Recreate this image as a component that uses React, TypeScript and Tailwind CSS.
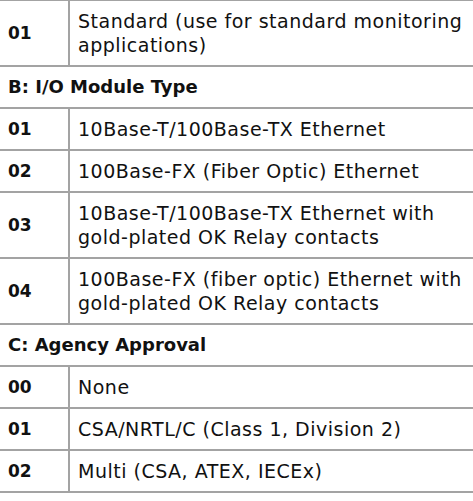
const rows: (
  | { kind: "head"; label: string }
  | { kind: "row"; code: string; text: string }
)[] = [
  { kind: "row", code: "01", text: "Standard (use for standard monitoring applications)" },
  { kind: "head", label: "B: I/O Module Type" },
  { kind: "row", code: "01", text: "10Base-T/100Base-TX Ethernet" },
  { kind: "row", code: "02", text: "100Base-FX (Fiber Optic) Ethernet" },
  { kind: "row", code: "03", text: "10Base-T/100Base-TX Ethernet with gold\u2011plated OK Relay contacts" },
  { kind: "row", code: "04", text: "100Base-FX (fiber optic) Ethernet with gold\u2011plated OK Relay contacts" },
  { kind: "head", label: "C: Agency Approval" },
  { kind: "row", code: "00", text: "None" },
  { kind: "row", code: "01", text: "CSA/NRTL/C (Class 1, Division 2)" },
  { kind: "row", code: "02", text: "Multi (CSA, ATEX, IECEx)" },
];

export default function App() {
  return (
    <div className="w-[473px] h-[501px] bg-white overflow-hidden font-['DejaVu_Sans','Noto_Sans',sans-serif] leading-6 text-[#111]">
      <div className="border-t-2 border-[#a3a3a3] -mt-px">
        {rows.map((r, i) =>
          r.kind === "head" ? (
            <div key={i} className="border-b-2 border-[#a3a3a3] px-2 py-2 text-[18px] font-bold">
              {r.label}
            </div>
          ) : (
            <div key={i} className="grid grid-cols-[70px_1fr] border-b-2 border-[#a3a3a3]">
              <div className="flex items-center px-2 py-2 text-[17px] font-bold border-r-2 border-[#a3a3a3]">
                {r.code}
              </div>
              <div className="pl-2 pr-0 py-2 text-[19px] tracking-[0.5px]">{r.text}</div>
            </div>
          )
        )}
      </div>
    </div>
  );
}
